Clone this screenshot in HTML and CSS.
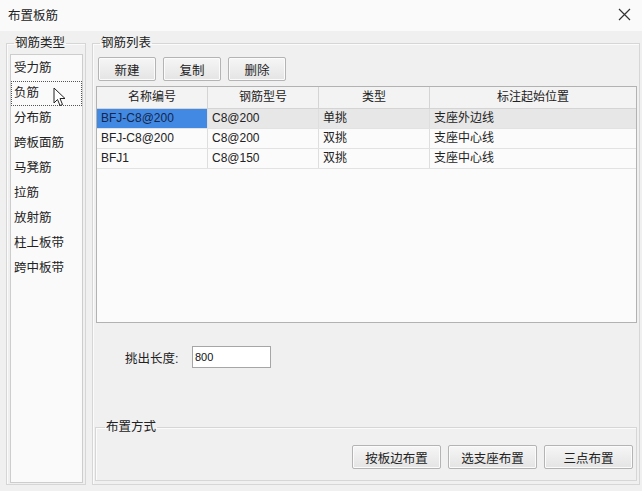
FILE: index.html
```html
<!DOCTYPE html>
<html lang="zh">
<head>
<meta charset="utf-8">
<title>布置板筋</title>
<link rel="stylesheet" href="styles.css">
</head>
<body>
<div class="window">
  <div class="titlebar">
    <span class="title">布置板筋</span>
    <svg class="close" width="13" height="13" viewBox="0 0 13 13"><path d="M1 1 L12 12 M12 1 L1 12" stroke="#333" stroke-width="1.2" fill="none"/></svg>
  </div>
  <div class="main">
    <fieldset class="group group-left">
      <legend>钢筋类型</legend>
      <ul class="typelist">
        <li>受力筋</li>
        <li class="focused">负筋</li>
        <li>分布筋</li>
        <li>跨板面筋</li>
        <li>马凳筋</li>
        <li>拉筋</li>
        <li>放射筋</li>
        <li>柱上板带</li>
        <li>跨中板带</li>
      </ul>
      <svg class="cursor" width="14" height="20" viewBox="0 0 14 20"><path d="M1 1 L1 16 L4.5 12.5 L7 18.5 L9.5 17.5 L7 11.5 L12 11.5 Z" fill="#fff" stroke="#222" stroke-width="1" stroke-linejoin="round"/></svg>
    </fieldset>
    <fieldset class="group group-right">
      <legend>钢筋列表</legend>
      <div class="toolbar">
        <button class="btn small">新建</button>
        <button class="btn small">复制</button>
        <button class="btn small">删除</button>
      </div>
      <div class="table">
        <div class="row head">
          <div class="cell c1">名称编号</div>
          <div class="cell c2">钢筋型号</div>
          <div class="cell c3">类型</div>
          <div class="cell c4">标注起始位置</div>
        </div>
        <div class="row selected">
          <div class="cell c1 sel">BFJ-C8@200</div>
          <div class="cell c2">C8@200</div>
          <div class="cell c3">单挑</div>
          <div class="cell c4">支座外边线</div>
        </div>
        <div class="row">
          <div class="cell c1">BFJ-C8@200</div>
          <div class="cell c2">C8@200</div>
          <div class="cell c3">双挑</div>
          <div class="cell c4">支座中心线</div>
        </div>
        <div class="row">
          <div class="cell c1">BFJ1</div>
          <div class="cell c2">C8@150</div>
          <div class="cell c3">双挑</div>
          <div class="cell c4">支座中心线</div>
        </div>
      </div>
      <div class="lenrow">
        <span class="lenlabel">挑出长度:</span>
        <div class="input">800</div>
      </div>
      <fieldset class="group group-mode">
        <legend>布置方式</legend>
        <div class="modebtns">
          <button class="btn wide">按板边布置</button>
          <button class="btn wide">选支座布置</button>
          <button class="btn wide">三点布置</button>
        </div>
      </fieldset>
    </fieldset>
  </div>
</div>
</body>
</html>
```

FILE: styles.css
```css
* { box-sizing: border-box; }

html, body {
  margin: 0;
  padding: 0;
}

body {
  width: 642px;
  height: 491px;
  overflow: hidden;
  background: #f0f0f0;
  font-family: "Liberation Sans", "Noto Sans CJK SC", sans-serif;
  font-size: 13px;
  color: #222;
}

.window {
  display: flex;
  flex-direction: column;
  height: 491px;
}

.titlebar {
  height: 31px;
  flex: none;
  background: #fafafa;
  display: flex;
  align-items: center;
  justify-content: space-between;
  padding: 0 11px 2px 8px;
}

.title {
  font-size: 12.5px;
  color: #222;
}

.close {
  display: block;
}

.main {
  flex: 1;
  display: flex;
  gap: 6px;
  padding: 4px 2px 6px 6px;
  min-height: 0;
}

.group {
  margin: 0;
  border: 1px solid #d6d6d6;
  box-shadow: inset 1px 1px 0 #fbfbfb;
  border-radius: 0;
  min-width: 0;
}

.group > legend {
  padding: 0 1px;
  line-height: 16px;
  font-size: 12.5px;
  color: #222;
}

.group-left {
  width: 80px;
  flex: none;
  padding: 3px 2px 1px 3px;
  display: flex;
  flex-direction: column;
  position: relative;
}

.group-left > legend {
  margin-left: 4px;
}

.typelist {
  list-style: none;
  margin: 0;
  padding: 1px 0 0 0;
  flex: 1;
  background: #fafafa;
  border: 1px solid #cdcdcd;
}

.typelist li {
  height: 25px;
  line-height: 25px;
  padding-left: 3px;
  font-size: 12.5px;
  color: #222;
  white-space: nowrap;
}

.typelist li.focused {
  border: 1px dotted #555;
  line-height: 23px;
  padding-left: 2px;
}

.cursor {
  position: absolute;
  left: 46px;
  top: 36px;
}

.group-right {
  flex: 1;
  padding: 6px 2px 3px 3px;
  display: flex;
  flex-direction: column;
}

.group-right > legend {
  margin-left: 4px;
}

.toolbar {
  display: flex;
  gap: 7px;
  padding-left: 2px;
}

.btn {
  font-family: "Liberation Sans", "Noto Sans CJK SC", sans-serif;
  font-size: 12.5px;
  color: #222;
  height: 24px;
  padding: 0;
  border: 1px solid #b4b4b4;
  border-radius: 2px;
  background: linear-gradient(#f6f6f6, #e4e4e4);
  box-shadow: inset 0 0 0 1px #fbfbfb;
}

.btn.small {
  width: 58px;
}

.btn.wide {
  width: 89px;
}

.table {
  margin-top: 5px;
  height: 237px;
  flex: none;
  border: 1px solid #b2b2b2;
  background: #fbfbfb;
  font-size: 12px;
}

.row {
  display: flex;
  height: 20px;
  border-bottom: 1px solid #e2e2e2;
}

.row.head {
  height: 22px;
  background: #f3f3f3;
  border-bottom: 1px solid #d4d4d4;
}

.cell {
  padding-left: 4px;
  line-height: 19px;
  white-space: nowrap;
  border-right: 1px solid #dedede;
}

.row.head .cell {
  text-align: center;
  padding-left: 0;
  line-height: 21px;
  border-right: 1px solid #d4d4d4;
}

.c1 { width: 111px; }
.c2 { width: 111px; }
.c3 { width: 111px; }
.c4 { flex: 1; border-right: none; }
.row.head .c4 { border-right: none; }

.row.selected {
  background: #e7e7e7;
}

.cell.sel {
  background: #4189e3;
  color: #15264a;
}

.lenrow {
  display: flex;
  align-items: center;
  margin-top: 23px;
  padding-left: 29px;
}

.lenlabel {
  width: 67px;
  font-size: 12.5px;
}

.input {
  width: 79px;
  height: 22px;
  border: 1px solid #a6a6a6;
  background: #fff;
  font-size: 11px;
  line-height: 20px;
  padding-left: 2px;
  color: #111;
}

.group-mode {
  margin-top: auto;
  padding: 10px 3px 11px 3px;
  margin-right: 0;
  margin-left: -1px;
}

.group-mode > legend {
  margin-left: 6px;
}

.modebtns {
  display: flex;
  justify-content: flex-end;
  gap: 7px;
}
```
